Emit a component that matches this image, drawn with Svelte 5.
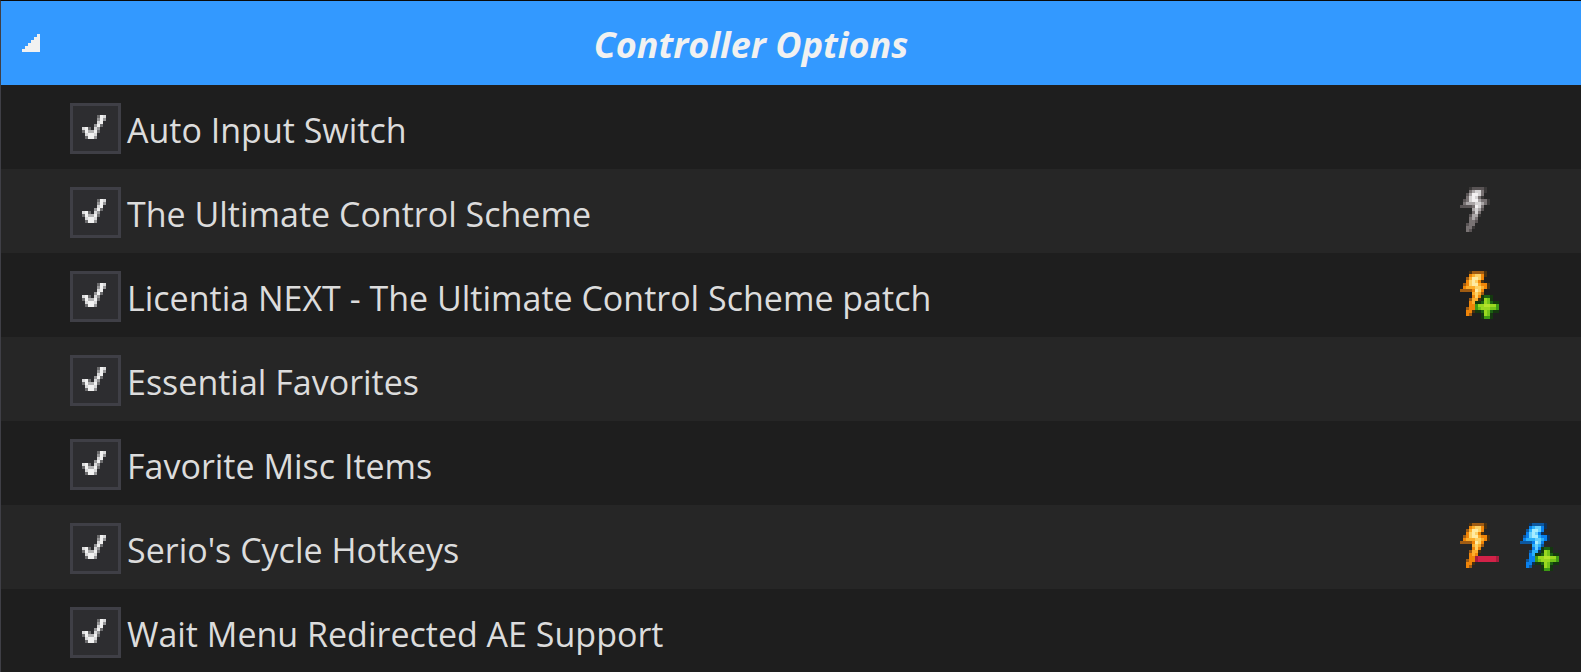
<script>
  const mods = $state([
    { name: 'Auto Input Switch', on: true, flags: [] },
    { name: 'The Ultimate Control Scheme', on: true, flags: ['gray'] },
    { name: 'Licentia NEXT - The Ultimate Control Scheme patch', on: true, flags: ['gold plus'] },
    { name: 'Essential Favorites', on: true, flags: [] },
    { name: 'Favorite Misc Items', on: true, flags: [] },
    { name: "Serio's Cycle Hotkeys", on: true, flags: ['gold minus', 'blue plus'] },
    { name: 'Wait Menu Redirected AE Support', on: true, flags: [] }
  ]);
  let open = $state(true);

  // Each letter is one pixel of the sprite, a = darkest shade, f = brightest.
  const bolt = [
    '...abbbba',
    '...cdeeca',
    '..bdffec',
    '..cefeca',
    '.bceffdcca',
    '.cdddeedca',
    'bbbbcfec',
    '....dedb',
    '....cec',
    '...bdda',
    '...cdc',
    '...ccb',
    '..bcc',
    '..cca',
    '..cb'
  ];
  const plus = [
    '.......abba',
    '.......aeda',
    '.....aabedbaa',
    '.....ceeffeec',
    '.....cdeeeddc',
    '.....aabedbaa',
    '.......aeda',
    '.......acca'
  ];
  const minus = ['.....abbbbbba', '.....abbbbbba'];
  const tick = ['.....bfe', '.....cfc', '.....ef.', '....cfb.', 'efb.ec..', 'bfddfb..', '.effe...', '.bffc...'];

  const shades = {
    gray: { a: '#3a3838', b: '#595455', c: '#787273', d: '#aaa6a7', e: '#d5d3d4', f: '#f3f1f2' },
    gold: { a: '#4a3110', b: '#a05c12', c: '#f08508', d: '#fcae2c', e: '#fdd165', f: '#feeaa2' },
    blue: { a: '#0c3058', b: '#0c58a0', c: '#0880ee', d: '#2ab0fa', e: '#68d0fd', f: '#a6ecfe' },
    plus: { a: '#14380f', b: '#1d6212', c: '#3f9a14', d: '#74c41a', e: '#9ad820', f: '#b4e42c' },
    minus: { a: '#a81c3c', b: '#d22248' },
    tick: { a: '#5a5a5c', b: '#6c6c6e', c: '#969698', d: '#b4b4b5', e: '#d8d8d9', f: '#f1f1f1' }
  };

  function pixels(rows, tone, top = 0) {
    return rows.flatMap((row, y) =>
      [...row].flatMap((ch, x) => (ch === '.' ? [] : [{ x, y: y + top, fill: shades[tone][ch] }]))
    );
  }

  function flagPixels(flag) {
    const [tone, mark] = flag.split(' ');
    const out = pixels(bolt, tone);
    if (mark === 'plus') out.push(...pixels(plus, 'plus', 8));
    if (mark === 'minus') out.push(...pixels(minus, 'minus', 11));
    return out;
  }
</script>

<section>
  <button class="group" aria-expanded={open} onclick={() => (open = !open)}>
    <svg class="arrow" viewBox="0 0 6 6" aria-hidden="true">
      <path d="M5 0h1v6H0V5h1V4h1V3h1V2h1V1h1z" />
    </svg>
    <span class="title">Controller Options</span>
  </button>

  {#if open}
    <ul>
      {#each mods as mod, i}
        <li>
          <label for="mod-{i}">
            <span class="box">
              <input id="mod-{i}" type="checkbox" bind:checked={mod.on} />
              {#if mod.on}
                <svg class="tick" viewBox="0 0 8 8" aria-hidden="true">
                  {#each pixels(tick, 'tick') as p}
                    <rect x={p.x} y={p.y} width="1" height="1" fill={p.fill} />
                  {/each}
                </svg>
              {/if}
            </span>
            <span class="name">{mod.name}</span>
          </label>
          <div class="flags">
            {#each mod.flags as flag}
              <svg class="flag" viewBox="0 0 13 16" aria-hidden="true">
                {#each flagPixels(flag) as p}
                  <rect x={p.x} y={p.y} width="1" height="1" fill={p.fill} />
                {/each}
              </svg>
            {/each}
          </div>
        </li>
      {/each}
    </ul>
  {/if}
</section>

<style>
  :global(body) {
    background: #1e1e1e;
    overflow: hidden;
  }

  section {
    border-left: 1px solid #3f3f46;
    border-top: 1px solid #0a0a0a;
    font-family: 'Open Sans', 'Noto Sans', sans-serif;
    font-size: 34px;
    line-height: 48px;
    color: #dcdcdc;
  }

  svg {
    display: block;
    shape-rendering: crispEdges;
  }

  .group {
    display: flex;
    align-items: center;
    width: 100%;
    height: 84px;
    padding: 0 80px 0 21px;
    border: 0;
    background: #3399ff;
    color: #f1f1f1;
    font: inherit;
    font-size: 36px;
    font-weight: 700;
    font-style: italic;
  }

  .arrow {
    width: 18px;
    height: 18px;
    margin-right: -18px;
    fill: #f1f1f1;
  }

  .title {
    flex: 1;
    padding: 4px 21px 0 0;
    text-align: center;
  }

  ul {
    margin: 0;
    padding: 0;
    list-style: none;
  }

  li {
    display: flex;
    align-items: center;
    justify-content: space-between;
    height: 84px;
    background: #1e1e1e;
  }

  li:nth-child(even) {
    background: #262626;
  }

  label {
    display: flex;
    align-items: center;
    gap: 6px;
    padding: 3px 0 0 69px;
  }

  .box {
    display: grid;
    place-items: center;
  }

  .box > * {
    grid-area: 1 / 1;
  }

  input {
    appearance: none;
    box-sizing: border-box;
    width: 51px;
    height: 51px;
    margin: 0;
    border: 3px solid #3f3f46;
    background: #2d2d30;
  }

  .tick {
    width: 24px;
    height: 24px;
    margin: 0 3px 3px 0;
    pointer-events: none;
  }

  .name {
    padding-top: 2px;
    white-space: nowrap;
  }

  .flags {
    display: grid;
    grid-template-columns: repeat(2, 60px);
    padding-right: 1px;
  }

  .flag {
    width: 39px;
    height: 48px;
  }
</style>
